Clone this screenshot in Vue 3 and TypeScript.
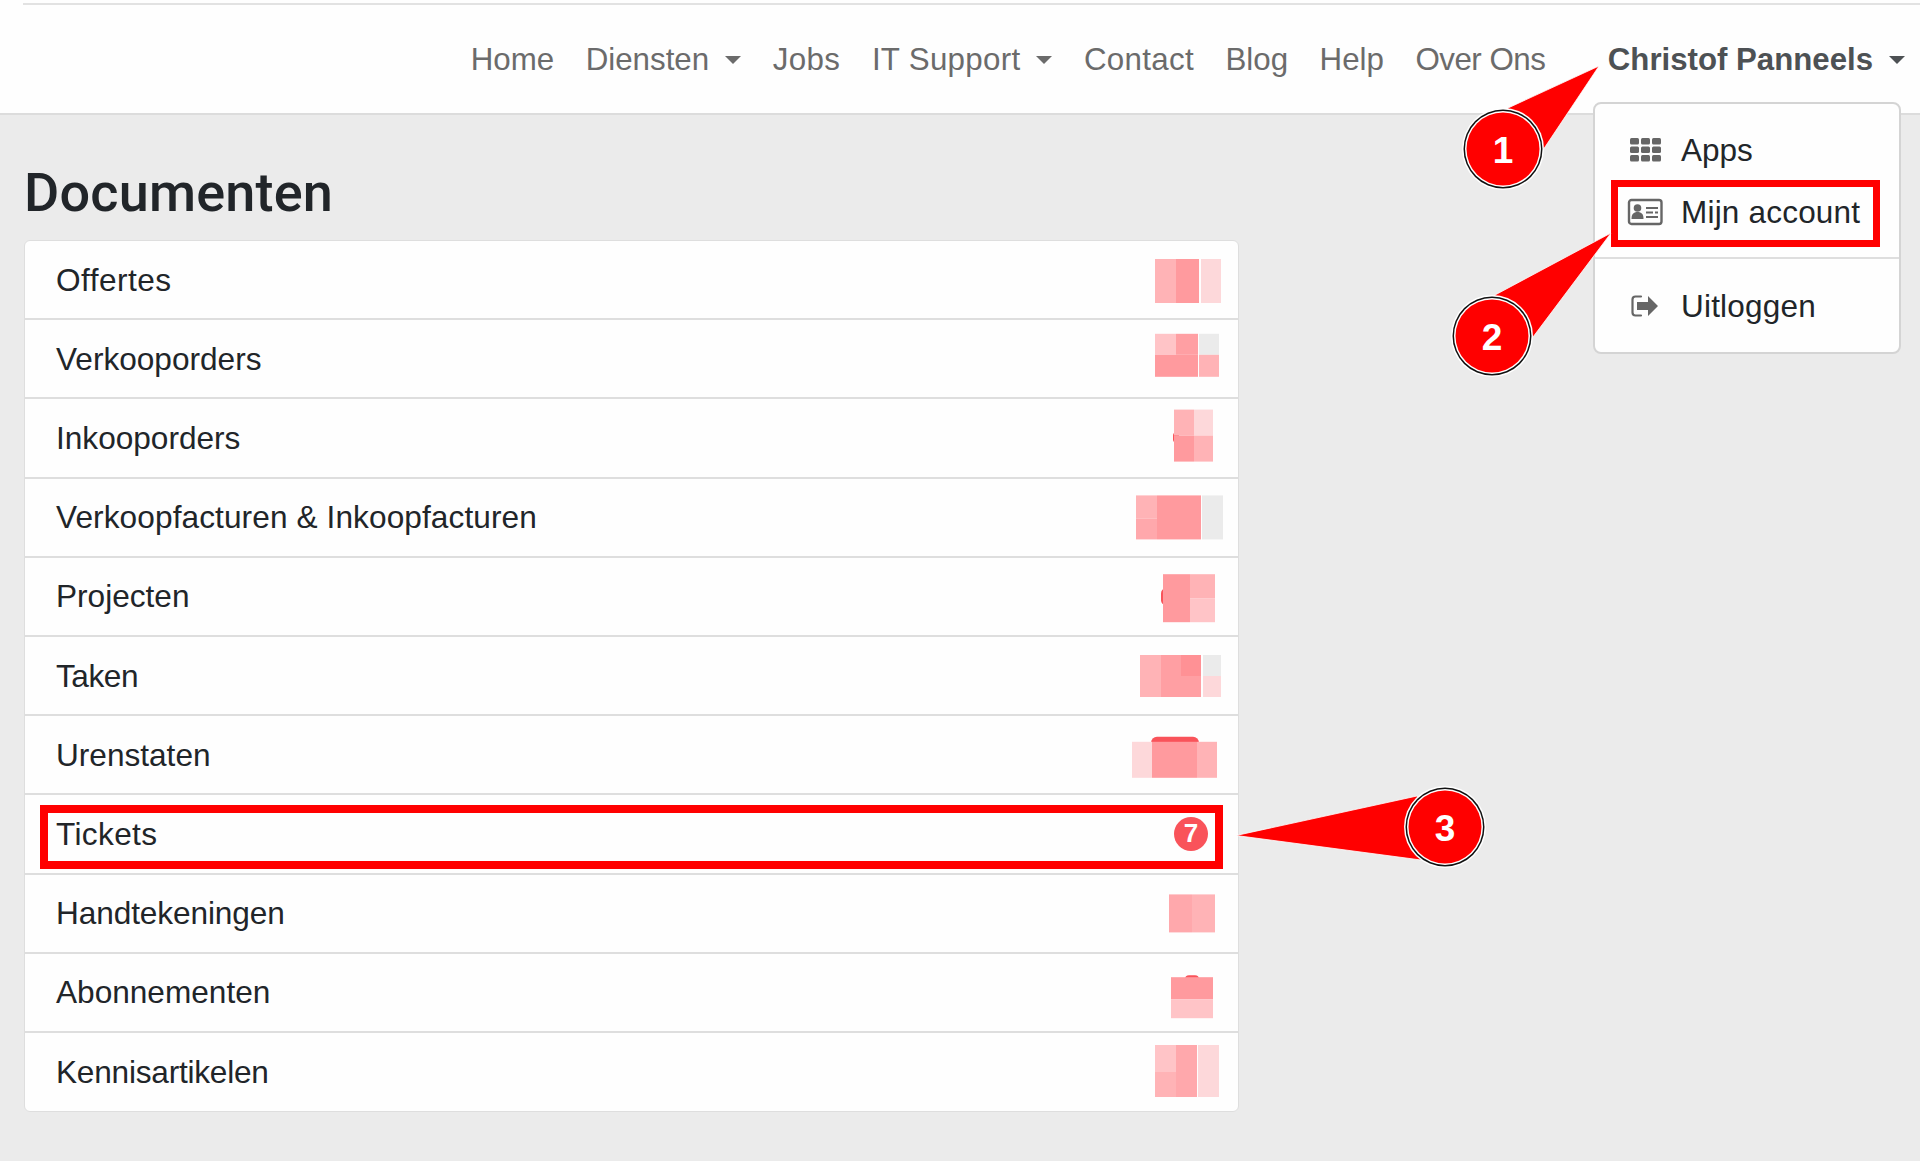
<script setup lang="ts">
type Block = [number, number, number, number, string]
const a = '#ffb3b6', b = '#ff9a9e', c = '#fdd8da', g = '#ebebeb', d = '#ffc4c7', e = '#ffa8ac', f = '#f9535a', h = '#ff9fa3', k = '#ff9195'

const navItems = [
  { label: 'Home', ls: 0 }, { label: 'Diensten', caret: true, ls: 0 }, { label: 'Jobs', ls: 0.4 },
  { label: 'IT Support', caret: true, ls: 0.3 }, { label: 'Contact', ls: 0.3 }, { label: 'Blog', ls: 0 },
  { label: 'Help', ls: 0 }, { label: 'Over Ons', ls: -0.5 },
]

const rows: { label: string; ls: number; blocks: Block[]; badge?: string }[] = [
  { label: 'Offertes', ls: 0.45, blocks: [[1155, 259, 21, 44, a], [1176, 259, 23, 44, b], [1201, 259, 20, 44, c]] },
  { label: 'Verkooporders', ls: 0, blocks: [[1155, 334, 21, 21, d], [1176, 334, 22, 21, h], [1199, 334, 20, 21, g], [1155, 355, 43, 22, b], [1199, 355, 20, 22, a]] },
  { label: 'Inkooporders', ls: 0, blocks: [[1173, 433, 6, 10, f], [1174, 410, 20, 26, a], [1194, 410, 19, 26, c], [1174, 436, 20, 26, b], [1194, 436, 19, 26, a]] },
  { label: 'Verkoopfacturen & Inkoopfacturen', ls: 0.1, blocks: [[1136, 495, 21, 23, a], [1136, 518, 21, 21, e], [1157, 495, 44, 44, b], [1202, 495, 21, 44, g]] },
  { label: 'Projecten', ls: 0, blocks: [[1161, 588, 10, 17, f], [1163, 574, 27, 48, b], [1190, 574, 25, 24, a], [1190, 598, 25, 24, d]] },
  { label: 'Taken', ls: -0.45, blocks: [[1140, 655, 21, 42, a], [1161, 655, 40, 42, h], [1181, 655, 20, 21, k], [1203, 655, 18, 21, g], [1203, 676, 18, 21, c]] },
  { label: 'Urenstaten', ls: 0, blocks: [[1151, 737, 48, 12, f], [1132, 742, 20, 36, c], [1152, 742, 45, 36, b], [1197, 742, 20, 36, a]] },
  { label: 'Tickets', ls: 0.35, blocks: [], badge: '7' },
  { label: 'Handtekeningen', ls: -0.1, blocks: [[1169, 894, 23, 38, e], [1192, 894, 23, 38, a]] },
  { label: 'Abonnementen', ls: 0, blocks: [[1185, 975, 14, 8, f], [1171, 977, 42, 22, b], [1171, 999, 42, 19, d]] },
  { label: 'Kennisartikelen', ls: -0.22, blocks: [[1155, 1045, 21, 27, d], [1155, 1072, 21, 25, a], [1176, 1045, 21, 52, e], [1198, 1045, 21, 52, c]] },
]

const offset = (i: number, y: number) => y - (241 + 79.2 * i)
const radius = (r: Block) => (r[4] === f ? Math.min(r[2], r[3]) / 2 : 0)
const spacing = (ls: number) => ({ letterSpacing: `${ls}px` })

const callouts = [
  { n: '1', cx: 1503, cy: 149, points: '1599,66 1508,108 1503,149 1543,150' },
  { n: '2', cx: 1492, cy: 336, points: '1611,233 1495,295 1492,336 1533,337' },
  { n: '3', cx: 1445, cy: 827, points: '1236,835.500 1417,796 1445,827 1421,860' },
]
</script>

<template>
  <div class="page">
    <header class="navbar">
      <div class="topline"></div>
      <nav class="nav">
        <a v-for="item in navItems" :key="item.label" class="nav-link">
          <span :style="spacing(item.ls)">{{ item.label }}</span><span v-if="item.caret" class="caret"></span>
        </a>
        <a class="nav-link user">Christof Panneels<span class="caret"></span></a>
      </nav>
    </header>

    <main class="main">
      <h1 class="title">Documenten</h1>
      <ul class="list">
        <li v-for="(row, i) in rows" :key="row.label" class="row">
          <span class="row-label" :style="spacing(row.ls)">{{ row.label }}</span>
          <span v-if="row.badge" class="badge">{{ row.badge }}</span>
          <svg v-else class="blur" width="110" height="78" viewBox="0 0 110 78">
            <rect
              v-for="(r, j) in row.blocks"
              :key="j"
              :x="r[0] - 1128"
              :y="offset(i, r[1])"
              :width="r[2]"
              :height="r[3]"
              :rx="radius(r)"
              :fill="r[4]"
            />
          </svg>
        </li>
      </ul>
    </main>

    <div class="menu">
      <a class="menu-item">
        <svg class="menu-icon" width="36" height="26" viewBox="0 0 36 26" fill="#666">
          <rect x="3" y="1" width="9" height="6.5" rx="1.5" /><rect x="14" y="1" width="9" height="6.5" rx="1.5" /><rect x="25" y="1" width="9" height="6.5" rx="1.5" />
          <rect x="3" y="9.5" width="9" height="6.5" rx="1.5" /><rect x="14" y="9.5" width="9" height="6.5" rx="1.5" /><rect x="25" y="9.5" width="9" height="6.5" rx="1.5" />
          <rect x="3" y="18" width="9" height="6.5" rx="1.5" /><rect x="14" y="18" width="9" height="6.5" rx="1.5" /><rect x="25" y="18" width="9" height="6.5" rx="1.5" />
        </svg>
        Apps
      </a>
      <a class="menu-item">
        <svg class="menu-icon" width="36" height="28" viewBox="0 0 36 28">
          <rect x="2" y="2" width="32.5" height="24" rx="2.5" fill="none" stroke="#666" stroke-width="2.4" />
          <circle cx="10.500" cy="10" r="3.800" fill="#666" />
          <path d="M4.500 21c0-5 2-7 6-7s6 2 6 7z" fill="#666" />
          <path d="M19 10h12M19 14.500h7M28 14.500h3M19 19h12" stroke="#666" stroke-width="2" fill="none" />
        </svg>
        <span class="wide">Mijn account</span>
      </a>
      <div class="divider"></div>
      <a class="menu-item">
        <svg class="menu-icon" width="36" height="26" viewBox="0 0 36 26">
          <path d="M14 3.500H8.500a3 3 0 0 0-3 3v13a3 3 0 0 0 3 3H14" fill="none" stroke="#666" stroke-width="2.200" stroke-linecap="round" />
          <path d="M10 9h11V3l10 10-10 10v-6H10z" fill="#666" />
        </svg>
        <span class="wide">Uitloggen</span>
      </a>
    </div>

    <div class="frame frame-account"></div>
    <div class="frame frame-tickets"></div>

    <svg class="annotations" width="1920" height="1161" viewBox="0 0 1920 1161">
      <g v-for="call in callouts" :key="call.n">
        <polygon :points="call.points" fill="#ff0000" stroke="#fff" stroke-width="0.8" />
        <circle :cx="call.cx" :cy="call.cy" r="41" fill="#fff" />
        <circle :cx="call.cx" :cy="call.cy" r="39.500" fill="#111" />
        <circle :cx="call.cx" :cy="call.cy" r="38" fill="#fff" />
        <circle :cx="call.cx" :cy="call.cy" r="36.500" fill="#ff0000" />
        <text :x="call.cx" :y="call.cy + 13.500" class="num" text-anchor="middle">{{ call.n }}</text>
      </g>
    </svg>
  </div>
</template>

<style scoped>
.page {
  position: relative;
  width: 1920px;
  height: 1161px;
  overflow: hidden;
  background: #ebebeb;
  font-family: "Liberation Sans", Arial, sans-serif;
  color: #212529;
}
.navbar {
  height: 115px;
  box-sizing: border-box;
  background: #fefefe;
  border-bottom: 2px solid #dcdcdc;
  padding-top: 3px;
}
.topline {
  height: 2px;
  margin-left: 23px;
  background: #e2e2e2;
}
.nav {
  display: flex;
  justify-content: flex-end;
  gap: 31.500px;
  padding: 36px 15px 0 0;
  font-size: 31.300px;
  line-height: 38px;
}
.nav-link {
  display: flex;
  align-items: center;
  color: #6b6b6b;
  white-space: nowrap;
}
.user {
  margin-left: 31px;
  color: #4d5154;
  font-weight: 700;
  font-size: 31.200px;
}
.caret {
  width: 0;
  height: 0;
  margin-left: 16px;
  border-top: 8px solid currentColor;
  border-left: 8px solid transparent;
  border-right: 8px solid transparent;
}
.main {
  padding: 48px 0 0 24px;
}
.title {
  margin: 0 0 17px;
  font-family: Roboto, "Liberation Sans", sans-serif;
  font-size: 54px;
  line-height: 60px;
  font-weight: 500;
  letter-spacing: 0.2px;
  color: #212529;
}
.list {
  width: 1215px;
  box-sizing: border-box;
  margin: 0;
  padding: 0;
  list-style: none;
  background: #fefefe;
  border: 1px solid #dedede;
  border-radius: 6px;
  overflow: hidden;
}
.row {
  display: flex;
  align-items: center;
  justify-content: space-between;
  box-sizing: border-box;
  height: 79.200px;
  padding-left: 31px;
  border-bottom: 2px solid #dedede;
  font-size: 31.600px;
}
.row:last-child {
  height: 78px;
  border-bottom: 0;
}
.row-label {
  padding-top: 1px;
}
.blur {
  display: block;
  flex: none;
  align-self: flex-start;
  overflow: visible;
}
.badge {
  display: flex;
  align-items: center;
  justify-content: center;
  width: 34px;
  height: 34px;
  margin-right: 30px;
  border-radius: 50%;
  background: #f9535a;
  color: #fff;
  font-size: 26px;
  font-weight: 700;
}
.menu {
  position: absolute;
  left: 1593px;
  top: 102px;
  width: 308px;
  height: 252px;
  box-sizing: border-box;
  padding: 15px 0 14px;
  background: #fefefe;
  border: 2px solid #d4d4d4;
  border-radius: 8px;
}
.menu-item {
  display: flex;
  align-items: center;
  height: 62px;
  padding-left: 32px;
  font-size: 31.500px;
  color: #212529;
  white-space: nowrap;
}
.wide {
  letter-spacing: 0.2px;
}
.menu-icon {
  flex: none;
  margin-right: 18px;
}
.divider {
  height: 2px;
  margin: 14px 0 16px;
  background: #dedede;
}
.frame {
  position: absolute;
  box-sizing: border-box;
  border: 8px solid #ff0000;
}
.frame-account {
  left: 1611px;
  top: 180px;
  width: 269px;
  height: 67px;
  border-width: 7px;
}
.frame-tickets {
  left: 40px;
  top: 805px;
  width: 1183px;
  height: 64px;
}
.annotations {
  position: absolute;
  left: 0;
  top: 0;
  pointer-events: none;
}
.num {
  font-family: "Liberation Sans", Arial, sans-serif;
  font-weight: 700;
  font-size: 37px;
  fill: #fff;
}
</style>
